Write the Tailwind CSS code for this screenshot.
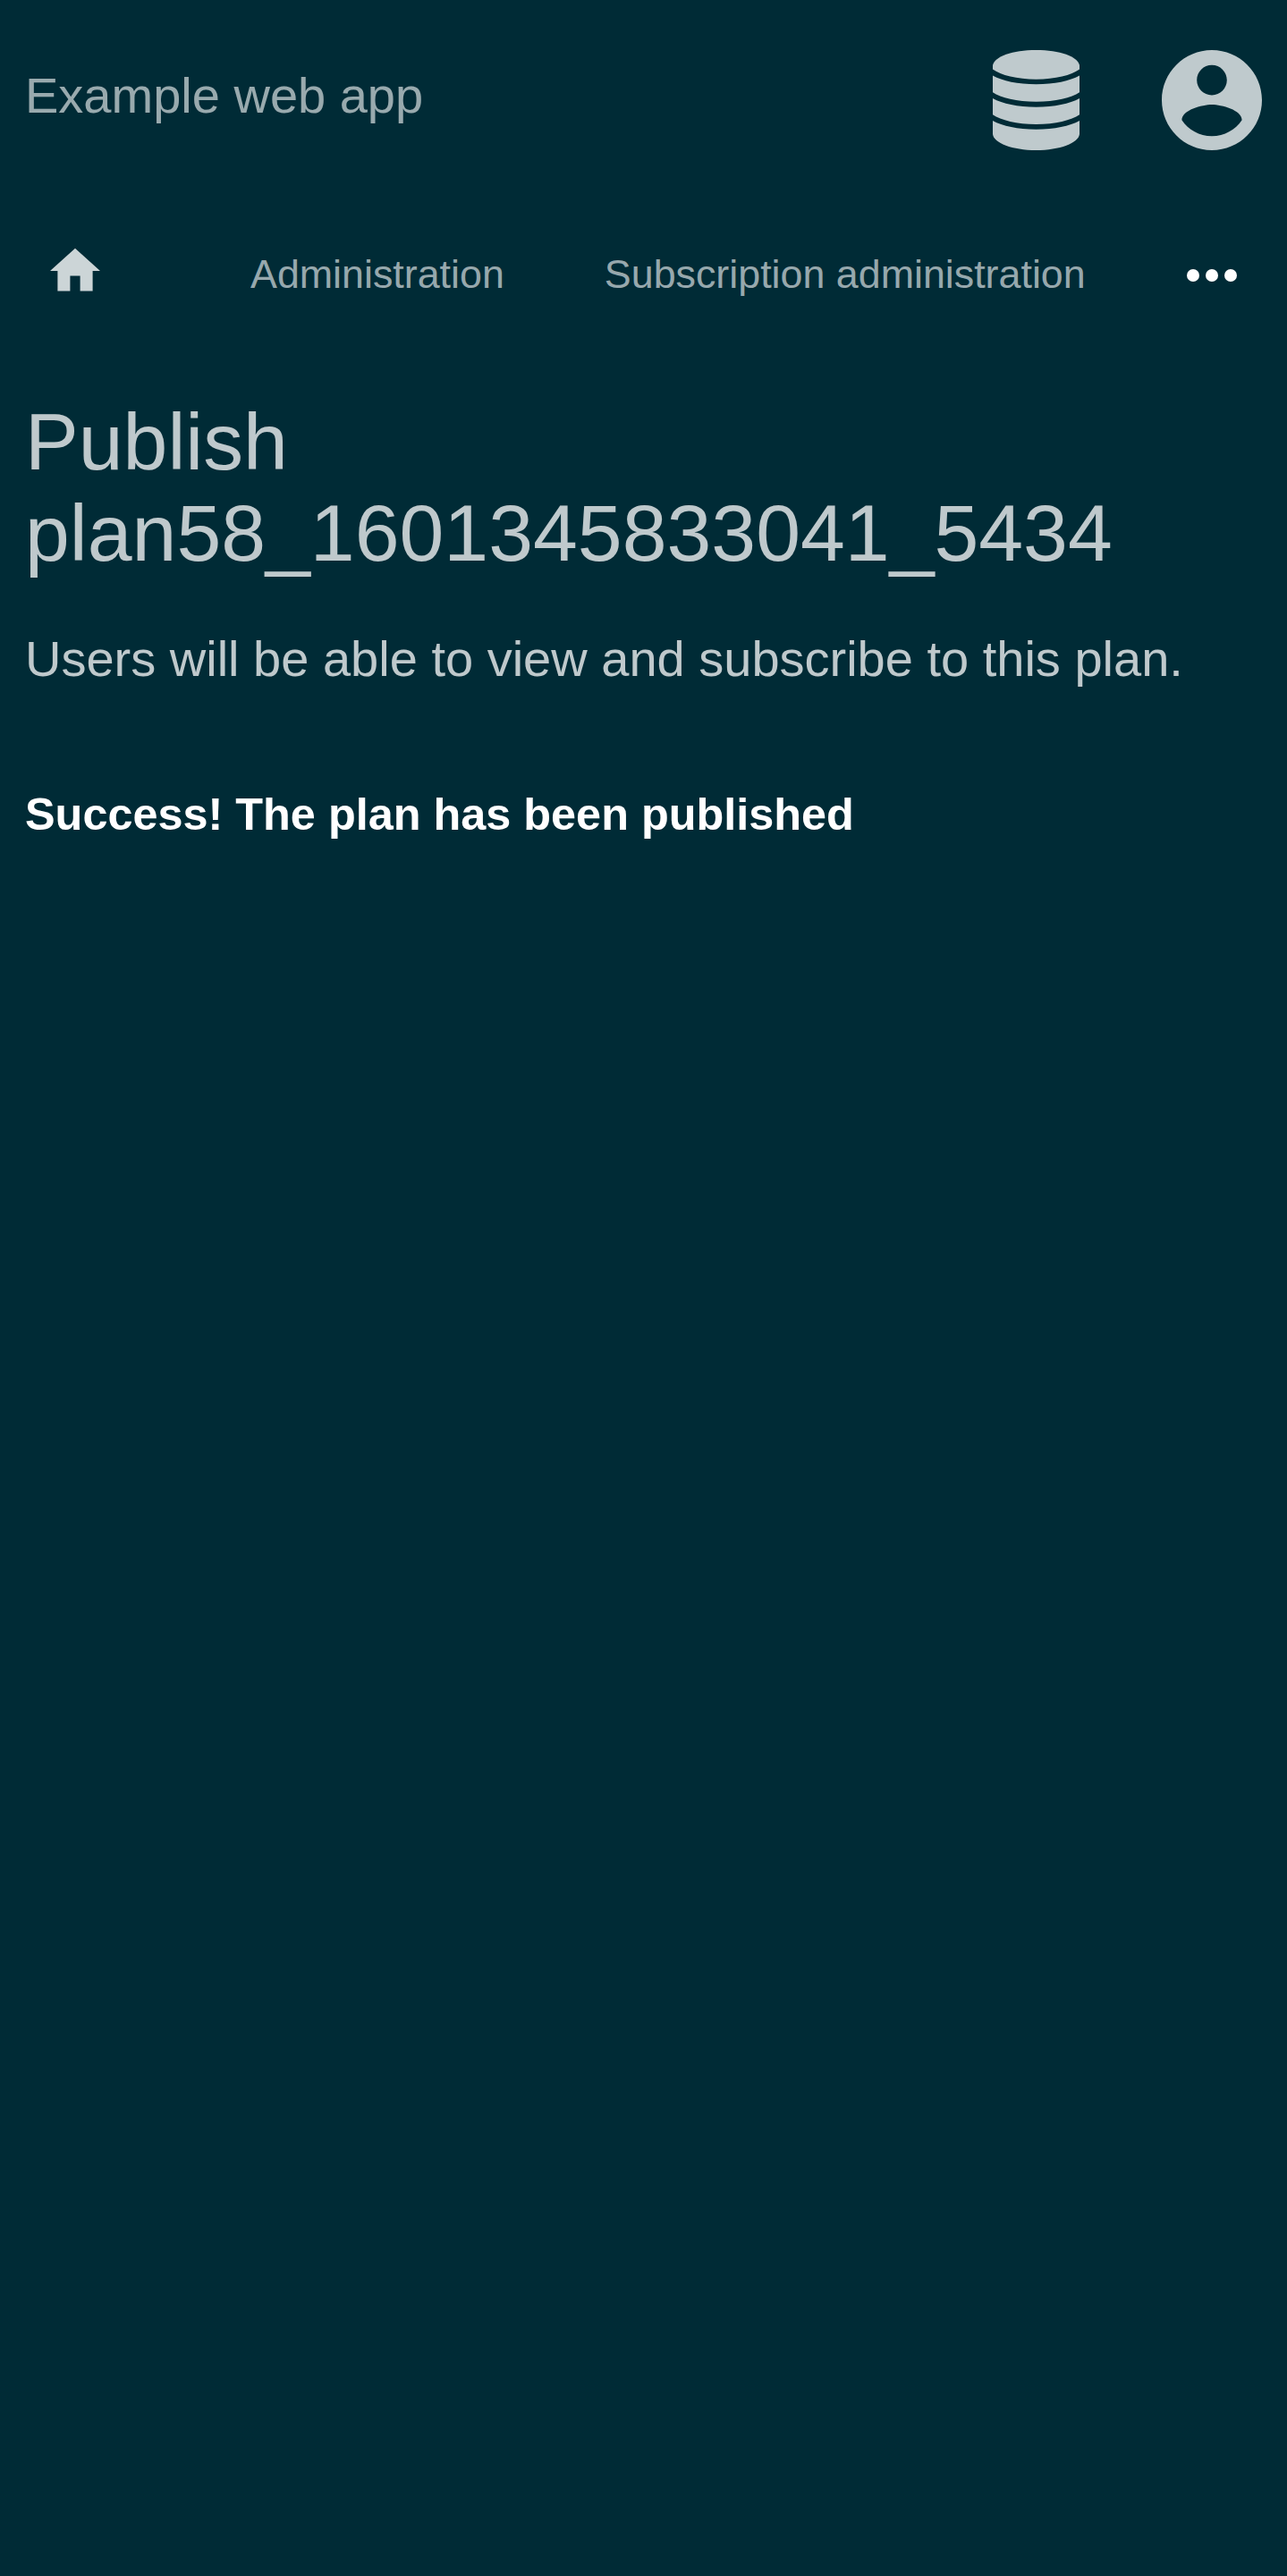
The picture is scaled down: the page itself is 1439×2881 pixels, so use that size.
<!DOCTYPE html>
<html lang="en">
<head>
<meta charset="utf-8">
<title>Example web app</title>
<script src="https://cdn.jsdelivr.net/npm/@tailwindcss/browser@4"></script>
</head>
<body class="min-h-screen bg-[#002b36] font-['Liberation_Sans',Arial,sans-serif] text-white/75">
<header class="flex h-[224px] items-start justify-between px-7 pt-14">
  <a class="mt-[19px] text-[56px] leading-[63px] text-white/60">Example web app</a>
  <div class="flex gap-[92px]">
    <svg class="h-28 w-[97px]" viewBox="0 0 97 112" fill="#bfcacd">
      <path d="M0 17C2 7 22 0 48.500 0S95 7 97 17V21.500C88 28 70 32.700 48.500 32.700S9 28 0 21.500Z"/>
      <path d="M0 28.500C11 34.500 28 38.300 48.500 38.300S86 34.500 97 28.500V47.300C88 53.500 70 57.700 48.500 57.700S9 53.500 0 47.300Z"/>
      <path d="M0 54C11 60 28 63.700 48.500 63.700S86 60 97 54V72.300C88 78.500 70 83 48.500 83S9 78.500 0 72.300Z"/>
      <path d="M0 79C11 85 28 88.700 48.500 88.700S86 85 97 79V94C96 104 75 112 48.500 112S1 104 0 94Z"/>
    </svg>
    <svg class="size-28" viewBox="2 2 20 20" fill="#bfcacd">
      <path d="M12 2C6.480 2 2 6.480 2 12s4.480 10 10 10 10-4.480 10-10S17.520 2 12 2zm0 3c1.660 0 3 1.340 3 3s-1.340 3-3 3-3-1.340-3-3 1.340-3 3-3zm0 14.200c-2.500 0-4.710-1.280-6-3.220.030-1.990 4-3.080 6-3.080 1.990 0 5.970 1.090 6 3.080-1.290 1.940-3.500 3.220-6 3.220z"/>
    </svg>
  </div>
</header>
<nav class="flex h-[168px] items-center px-14 text-[44.8px] leading-[52px] text-white/60">
  <a class="mr-[168px] pb-[11px]"><svg class="size-14" viewBox="2 2 20 20" fill="#ccd5d7"><path d="M10 20v-6h4v6h5v-8h3L12 3 2 12h3v8z"/></svg></a>
  <a class="mr-28 pb-1">Administration</a>
  <a class="pb-1">Subscription administration</a>
  <svg class="ml-auto size-14" viewBox="0 0 56 56" fill="white"><circle cx="7" cy="28" r="7"/><circle cx="28" cy="28" r="7"/><circle cx="49" cy="28" r="7"/></svg>
</nav>
<main class="px-7 pt-[51px]">
  <h1 class="text-[89.6px] leading-[102px]">Publish plan58_1601345833041_5434</h1>
  <p class="mt-[58px] text-[56px] leading-[63px]">Users will be able to view and subscribe to this plan.</p>
  <p class="mt-[114px] text-[50.4px] leading-[57px] font-bold text-white">Success! The plan has been published</p>
</main>
</body>
</html>
